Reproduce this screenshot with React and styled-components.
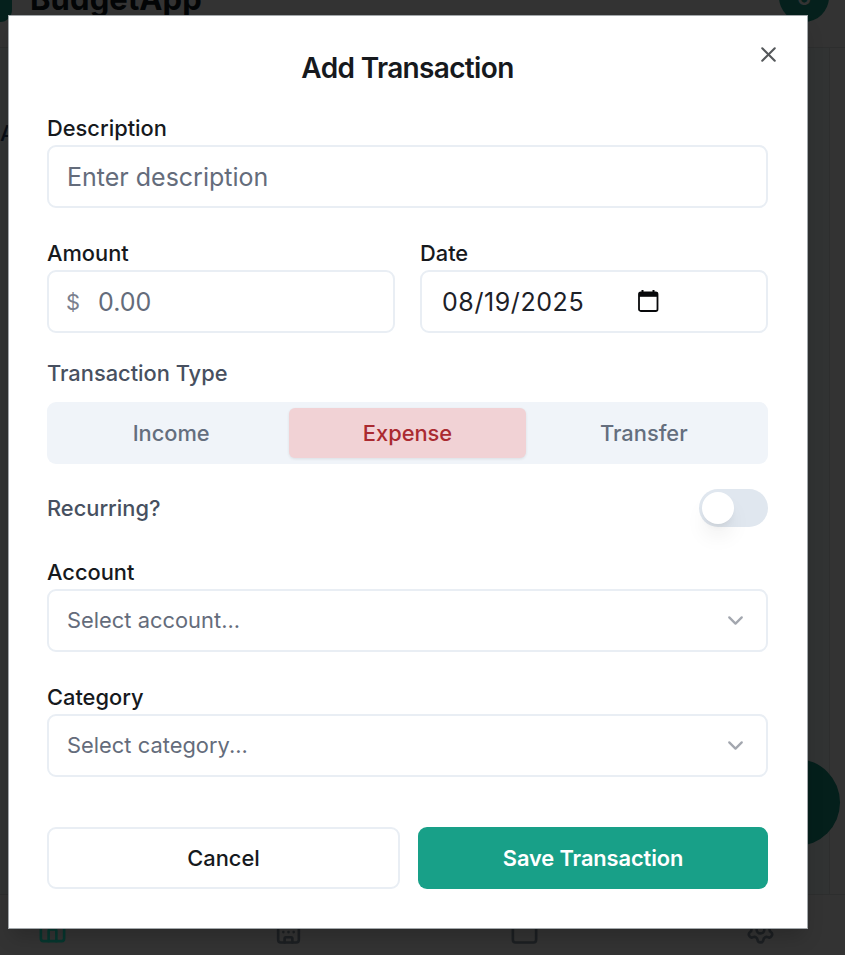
import React, { useState } from "react";
import styled, { createGlobalStyle } from "styled-components";
import { X, ChevronDown, House, Building, Calendar, Settings } from "lucide-react";

const GlobalStyle = createGlobalStyle`
  *, *::before, *::after { box-sizing: border-box; }
  body { margin: 0; overflow: hidden; font-family: Inter, sans-serif; color: #16191d; }
  button, input { font-family: inherit; }
`;

const Screen = styled.div`
  position: relative;
  display: flex;
  flex-direction: column;
  width: 845px;
  height: 955px;
  overflow: hidden;
  background: #333333;
`;

const TopBar = styled.header`
  display: flex;
  align-items: flex-end;
  justify-content: space-between;
  height: 48px;
  padding-right: 16px;
  border-bottom: 1px solid #2d2e2e;
`;

const Brand = styled.div`
  display: flex;
  align-items: flex-end;
  gap: 18px;
  height: 100%;
`;

const BrandMark = styled.div`
  width: 12px;
  height: 50px;
  margin-bottom: 25px;
  border-radius: 0 0 12px 0;
  background: #05201c;
`;

const BrandName = styled.div`
  font-size: 31px;
  font-weight: 700;
  line-height: 38px;
  letter-spacing: 0.1px;
  color: #030506;
  margin-bottom: 29px;
`;

const Avatar = styled.div`
  display: flex;
  align-items: center;
  justify-content: center;
  width: 50px;
  height: 50px;
  margin-bottom: 25px;
  border-radius: 50%;
  background: #05201c;
  color: #333;
  font-size: 22px;
  font-weight: 600;
`;

const Content = styled.main`
  flex: 1;
  width: 830px;
  padding-top: 72px;
  border-right: 1px solid #2d2e2e;
  background: #313333;
`;

const ContentHeading = styled.div`
  font-size: 22px;
  line-height: 26px;
  font-weight: 500;
  color: #080d15;
`;

const AddButton = styled.div`
  position: absolute;
  left: 753px;
  top: 759px;
  width: 87px;
  height: 87px;
  border-radius: 50%;
  background: #041f1b;
`;

const TabBar = styled.nav`
  display: flex;
  justify-content: space-between;
  height: 61px;
  padding: 19px 69px 0 37px;
  border-top: 1px solid #2d2e2e;
`;

const Tab = styled.div`
  display: flex;
  color: ${(p) => (p.$active ? "#06362e" : "#1c1f22")};
`;

const Dialog = styled.section`
  position: absolute;
  left: 8px;
  top: 15px;
  display: flex;
  flex-direction: column;
  width: 800px;
  height: 914px;
  padding: 36px 39px 0 38px;
  border: 1px solid #a3a8ab;
  background: #fff;
  box-shadow: 0 12px 18px -4px rgba(0, 0, 0, 0.18);
`;

const CloseButton = styled.button`
  position: absolute;
  right: 26px;
  top: 26px;
  display: flex;
  padding: 0;
  border: 0;
  background: none;
  color: #55585b;
`;

const Title = styled.h1`
  margin: 0 0 33px;
  font-size: 28px;
  font-weight: 600;
  line-height: 32px;
  letter-spacing: -0.65px;
  text-align: center;
`;

const Field = styled.div`
  display: flex;
  flex-direction: column;
  gap: ${(p) => p.$gap ?? 6}px;
  margin-bottom: ${(p) => p.$after ?? 34}px;
`;

const Columns = styled.div`
  display: grid;
  grid-template-columns: 348px 348px;
  gap: 25px;
`;

const Label = styled.label`
  height: 22px;
  font-size: 21.84px;
  font-weight: 500;
  line-height: 22px;
  color: ${(p) => (p.$muted ? "#475060" : "#16191d")};
`;

const Control = styled.div`
  display: flex;
  align-items: center;
  height: 63px;
  padding: 0 18px;
  border: 2px solid #e9eef4;
  border-radius: 9px;
  background: #fff;
`;

const Input = styled.input`
  flex: 1;
  min-width: 0;
  padding: 0;
  border: 0;
  outline: 0;
  background: none;
  font-size: 25px;
  line-height: 36px;
  color: #1d2127;
  &::placeholder { color: #646c7b; opacity: 1; }
`;

const DateInput = styled(Input)`
  flex: 0 0 197px;
  padding-left: 2px;
  letter-spacing: 0.58px;
`;

const Currency = styled.span`
  width: 32px;
  margin-left: -1px;
  font-size: 21.84px;
  color: #7a808e;
`;

const Placeholder = styled.span`
  flex: 1;
  padding-bottom: 2px;
  font-size: 21.84px;
  letter-spacing: 0.03px;
  color: #646c7b;
`;

const Chevron = styled(ChevronDown)`
  color: #a3a7af;
`;

const Segments = styled.div`
  display: grid;
  grid-template-columns: repeat(3, 1fr);
  height: 62px;
  padding: 6px;
  border-radius: 9px;
  background: #f0f4f9;
`;

const Segment = styled.button`
  border: 0;
  border-radius: 6px;
  padding: 0;
  font-size: 21.84px;
  font-weight: 500;
  background: ${(p) => (p.$active ? "#f1d2d5" : "transparent")};
  color: ${(p) => (p.$active ? "#aa2a30" : "#646e7e")};
  box-shadow: ${(p) => (p.$active ? "0 1px 3px rgba(0,0,0,0.09)" : "none")};
`;

const SwitchRow = styled.div`
  display: flex;
  align-items: center;
  justify-content: space-between;
  height: 38px;
  margin-bottom: 34px;
`;

const Switch = styled.button`
  display: flex;
  align-items: center;
  width: 69px;
  height: 38px;
  padding: 0 3px;
  border: 0;
  border-radius: 19px;
  background: #e0e7ef;
`;

const Thumb = styled.span`
  width: 32px;
  height: 32px;
  border-radius: 50%;
  background: #fff;
  box-shadow: 0 14px 22px -3px rgba(0, 0, 0, 0.08), 0 5px 9px -5px rgba(0, 0, 0, 0.12);
`;

const Actions = styled.div`
  display: grid;
  grid-template-columns: 353px 350px;
  gap: 18px;
`;

const Button = styled.button`
  height: 62px;
  padding: 0;
  border: ${(p) => (p.$primary ? "0" : "2px solid #e9eef4")};
  border-radius: 9px;
  background: ${(p) => (p.$primary ? "#18a088" : "#fff")};
  color: ${(p) => (p.$primary ? "#fff" : "#16191d")};
  font-size: 21.84px;
  font-weight: ${(p) => (p.$primary ? 600 : 500)};
  letter-spacing: ${(p) => (p.$primary ? "-0.1px" : "0")};
`;

const DateGlyph = styled.svg`
  margin-bottom: 2px;
`;

function DateIcon() {
  return (
    <DateGlyph width="22" height="24" viewBox="0 0 22 24">
      <path d="M5.5 1v4M16.5 1v4" stroke="#08090b" strokeWidth="2" />
      <rect x="2" y="3.5" width="18.5" height="18.5" rx="1.8" fill="none" stroke="#08090b" strokeWidth="1.8" />
      <path d="M2 3.2h18.5v4.6H2z" fill="#08090b" />
    </DateGlyph>
  );
}

function SelectField({ label, placeholder, after }) {
  return (
    <Field $after={after}>
      <Label>{label}</Label>
      <Control>
        <Placeholder>{placeholder}</Placeholder>
        <Chevron size={25} strokeWidth={2.2} />
      </Control>
    </Field>
  );
}

export default function App() {
  const [type, setType] = useState("Expense");
  return (
    <Screen>
      <GlobalStyle />
      <TopBar>
        <Brand>
          <BrandMark />
          <BrandName>BudgetApp</BrandName>
        </Brand>
        <Avatar>6</Avatar>
      </TopBar>
      <Content>
        <ContentHeading>A</ContentHeading>
      </Content>
      <TabBar>
        <Tab $active><House size={31} /></Tab>
        <Tab><Building size={31} /></Tab>
        <Tab><Calendar size={31} /></Tab>
        <Tab><Settings size={31} /></Tab>
      </TabBar>
      <AddButton />
      <Dialog>
        <CloseButton aria-label="Close"><X size={25} strokeWidth={2} /></CloseButton>
        <Title>Add Transaction</Title>
        <Field>
          <Label>Description</Label>
          <Control><Input placeholder="Enter description" /></Control>
        </Field>
        <Columns>
          <Field $after={29}>
            <Label>Amount</Label>
            <Control>
              <Currency>$</Currency>
              <Input placeholder="0.00" />
            </Control>
          </Field>
          <Field $after={29}>
            <Label>Date</Label>
            <Control>
              <DateInput defaultValue="08/19/2025" />
              <DateIcon />
            </Control>
          </Field>
        </Columns>
        <Field $gap={18} $after={25}>
          <Label $muted>Transaction Type</Label>
          <Segments>
            {["Income", "Expense", "Transfer"].map((name) => (
              <Segment key={name} $active={type === name} onClick={() => setType(name)}>
                {name}
              </Segment>
            ))}
          </Segments>
        </Field>
        <SwitchRow>
          <Label $muted>Recurring?</Label>
          <Switch aria-label="Recurring"><Thumb /></Switch>
        </SwitchRow>
        <SelectField label="Account" placeholder="Select account..." />
        <SelectField label="Category" placeholder="Select category..." after={50} />
        <Actions>
          <Button>Cancel</Button>
          <Button $primary>Save Transaction</Button>
        </Actions>
      </Dialog>
    </Screen>
  );
}
